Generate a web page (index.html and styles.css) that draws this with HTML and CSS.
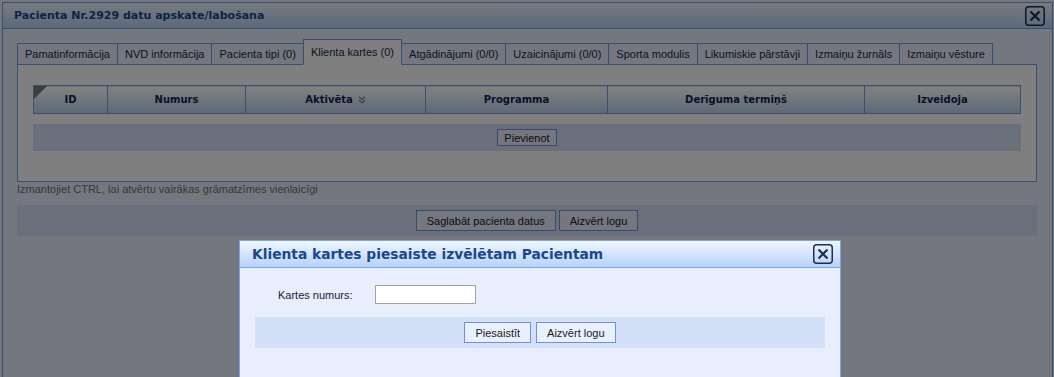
FILE: index.html
```html
<!DOCTYPE html>
<html lang="lv">

<head>
    <meta charset="UTF-8">
    <meta name="viewport" content="width=device-width, initial-scale=1.0">
    <title>Pacienta datu apskate</title>
    <link rel="stylesheet" href="styles.css">
</head>

<body>
    <div class="window main-window">
        <div class="window-title">
            <span class="window-caption">Pacienta Nr.2929 datu apskate/labošana</span>
            <span class="close-btn">
                <svg width="20" height="20" viewBox="0 0 20 20">
                    <rect x="0.75" y="0.75" width="18.5" height="18.5" rx="3" fill="none" stroke="#1e2f4e" stroke-width="1.5" />
                    <path d="M5.5 5.5 L14.5 14.5 M14.5 5.5 L5.5 14.5" stroke="#1e2f4e" stroke-width="2.2" fill="none" />
                </svg>
            </span>
        </div>

        <div class="window-body">
            <div class="tabs">
                <div class="tab">Pamatinformācija</div>
                <div class="tab">NVD informācija</div>
                <div class="tab">Pacienta tipi (0)</div>
                <div class="tab active">Klienta kartes (0)</div>
                <div class="tab">Atgādinājumi (0/0)</div>
                <div class="tab">Uzaicinājumi (0/0)</div>
                <div class="tab">Sporta modulis</div>
                <div class="tab">Likumiskie pārstāvji</div>
                <div class="tab">Izmaiņu žurnāls</div>
                <div class="tab">Izmaiņu vēsture</div>
            </div>

            <div class="tab-panel">
                <table class="grid">
                    <colgroup>
                        <col style="width: 74px">
                        <col style="width: 138px">
                        <col style="width: 180px">
                        <col style="width: 182px">
                        <col style="width: 257px">
                        <col style="width: 156px">
                    </colgroup>
                    <thead>
                        <tr>
                            <th class="corner">ID</th>
                            <th>Numurs</th>
                            <th>Aktivēta<svg class="sort-icon" width="8" height="8" viewBox="0 0 8 8">
                                    <path d="M1 0.8 L4 3.6 L7 0.8 M1 4.2 L4 7 L7 4.2" stroke="#6a7ea6" stroke-width="1.2" fill="none" />
                                </svg></th>
                            <th>Programma</th>
                            <th>Derīguma termiņš</th>
                            <th>Izveidoja</th>
                        </tr>
                    </thead>
                </table>
                <div class="grid-actions">
                    <button class="btn btn-small">Pievienot</button>
                </div>
            </div>

            <div class="hint">Izmantojiet CTRL, lai atvērtu vairākas grāmatzīmes vienlaicīgi</div>

            <div class="button-bar">
                <button class="btn">Saglabāt pacienta datus</button>
                <button class="btn">Aizvērt logu</button>
            </div>
        </div>
    </div>

    <div class="overlay"></div>

    <div class="window modal-window">
        <div class="window-title">
            <span class="window-caption">Klienta kartes piesaiste izvēlētam Pacientam</span>
            <span class="close-btn">
                <svg width="20" height="20" viewBox="0 0 20 20">
                    <rect x="0.75" y="0.75" width="18.5" height="18.5" rx="3" fill="none" stroke="#1e2f4e" stroke-width="1.5" />
                    <path d="M5.5 5.5 L14.5 14.5 M14.5 5.5 L5.5 14.5" stroke="#1e2f4e" stroke-width="2.2" fill="none" />
                </svg>
            </span>
        </div>

        <div class="modal-body">
            <div class="form-row">
                <label class="form-label" for="cardNumber">Kartes numurs:</label>
                <input class="form-input" id="cardNumber" type="text">
            </div>
            <div class="button-bar modal-buttons">
                <button class="btn">Piesaistīt</button>
                <button class="btn">Aizvērt logu</button>
            </div>
        </div>
    </div>
</body>

</html>
```

FILE: styles.css
```css
* {
    margin: 0;
    padding: 0;
    box-sizing: border-box;
}

body {
    font-family: 'Liberation Sans', Arial, sans-serif;
    font-size: 11px;
    color: #1a1a1a;
    background: #eceff8;
    height: 100vh;
    overflow: hidden;
}

/* windows */

.window {
    position: absolute;
    background: #e8eefc;
    border: 1px solid #6e9ee2;
    border-bottom: none;
    overflow: hidden;
}

.main-window {
    left: 2px;
    top: 2px;
    width: 1051px;
    bottom: 0;
}

.modal-window {
    left: 239px;
    top: 240px;
    width: 602px;
    bottom: 0;
    z-index: 20;
    border-color: #7aa6e6;
}

.window-title {
    display: flex;
    align-items: center;
    justify-content: space-between;
    background: linear-gradient(#eff6ff, #b7d3fa);
    border-bottom: 1px solid #6e9ee2;
}

.main-window .window-title {
    height: 26px;
    padding: 0 7px 0 11px;
}

.modal-window .window-title {
    height: 27px;
    padding: 0 7px 0 12px;
    border-bottom-color: #7aa6e6;
}

.window-caption {
    font-family: 'DejaVu Sans', Verdana, sans-serif;
    font-weight: bold;
    font-size: 11px;
    color: #1b478c;
}

.modal-window .window-caption {
    font-size: 13.8px;
}

.close-btn {
    display: flex;
    width: 20px;
    height: 20px;
}

.window-body {
    padding: 10px 15px 0 14px;
}

/* tabs */

.tabs {
    display: flex;
    align-items: flex-end;
    margin-bottom: -1px;
}

.tab {
    position: relative;
    height: 22px;
    line-height: 20px;
    padding: 0 7px;
    margin-left: -1px;
    background: #e8eefc;
    border: 1px solid #6e9ee2;
    color: #15284a;
    white-space: nowrap;
}

.tab:first-child {
    margin-left: 0;
}

.tab.active {
    height: 26px;
    padding-top: 2px;
    background: #ffffff;
    border-bottom-color: #ffffff;
    z-index: 2;
}

.tab-panel {
    background: #ffffff;
    border: 1px solid #6e9ee2;
    padding: 20px 15px 30px;
}

/* grid */

.grid {
    width: 988px;
    border-collapse: collapse;
    table-layout: fixed;
}

.grid th {
    height: 28px;
    border: 1px solid #6e9ee2;
    background: linear-gradient(#ffffff 10%, #b9d2f3);
    font-family: 'DejaVu Sans', Verdana, sans-serif;
    font-size: 10px;
    font-weight: bold;
    color: #10264e;
    text-align: center;
    vertical-align: middle;
}

.grid th.corner {
    position: relative;
}

.grid th.corner::before {
    content: '';
    position: absolute;
    left: 0;
    top: 0;
    border-top: 13px solid #7a7a7a;
    border-right: 13px solid transparent;
}

.sort-icon {
    margin-left: 5px;
    vertical-align: -1px;
}

.grid-actions {
    display: flex;
    justify-content: center;
    margin-top: 10px;
    padding: 5px 0;
    background: #d3e0f7;
}

/* buttons */

.btn {
    font-family: 'Liberation Sans', Arial, sans-serif;
    font-size: 11px;
    color: #1a1a1a;
    height: 21px;
    padding: 0 10px;
    background: #e9effc;
    border: 1px solid #6e94d2;
    cursor: pointer;
}

.btn-small {
    height: 17px;
    padding: 0 6px;
}

.hint {
    line-height: 14px;
    color: #707070;
}

.button-bar {
    display: flex;
    justify-content: center;
    gap: 3px;
    margin-top: 9px;
    padding: 5px 0;
    background: #d3e0f7;
}

/* modal */

.overlay {
    position: fixed;
    inset: 0;
    background: rgba(0, 0, 0, 0.5);
    z-index: 10;
}

.modal-body {
    padding: 17px 15px 0;
}

.form-row {
    display: flex;
    align-items: center;
    padding-left: 23px;
}

.form-label {
    width: 97px;
    color: #221a2e;
}

.form-input {
    width: 101px;
    height: 19px;
    border: 1px solid #a3a3a3;
    background: #ffffff;
}

.modal-buttons {
    margin-top: 13px;
    gap: 5px;
}
```
